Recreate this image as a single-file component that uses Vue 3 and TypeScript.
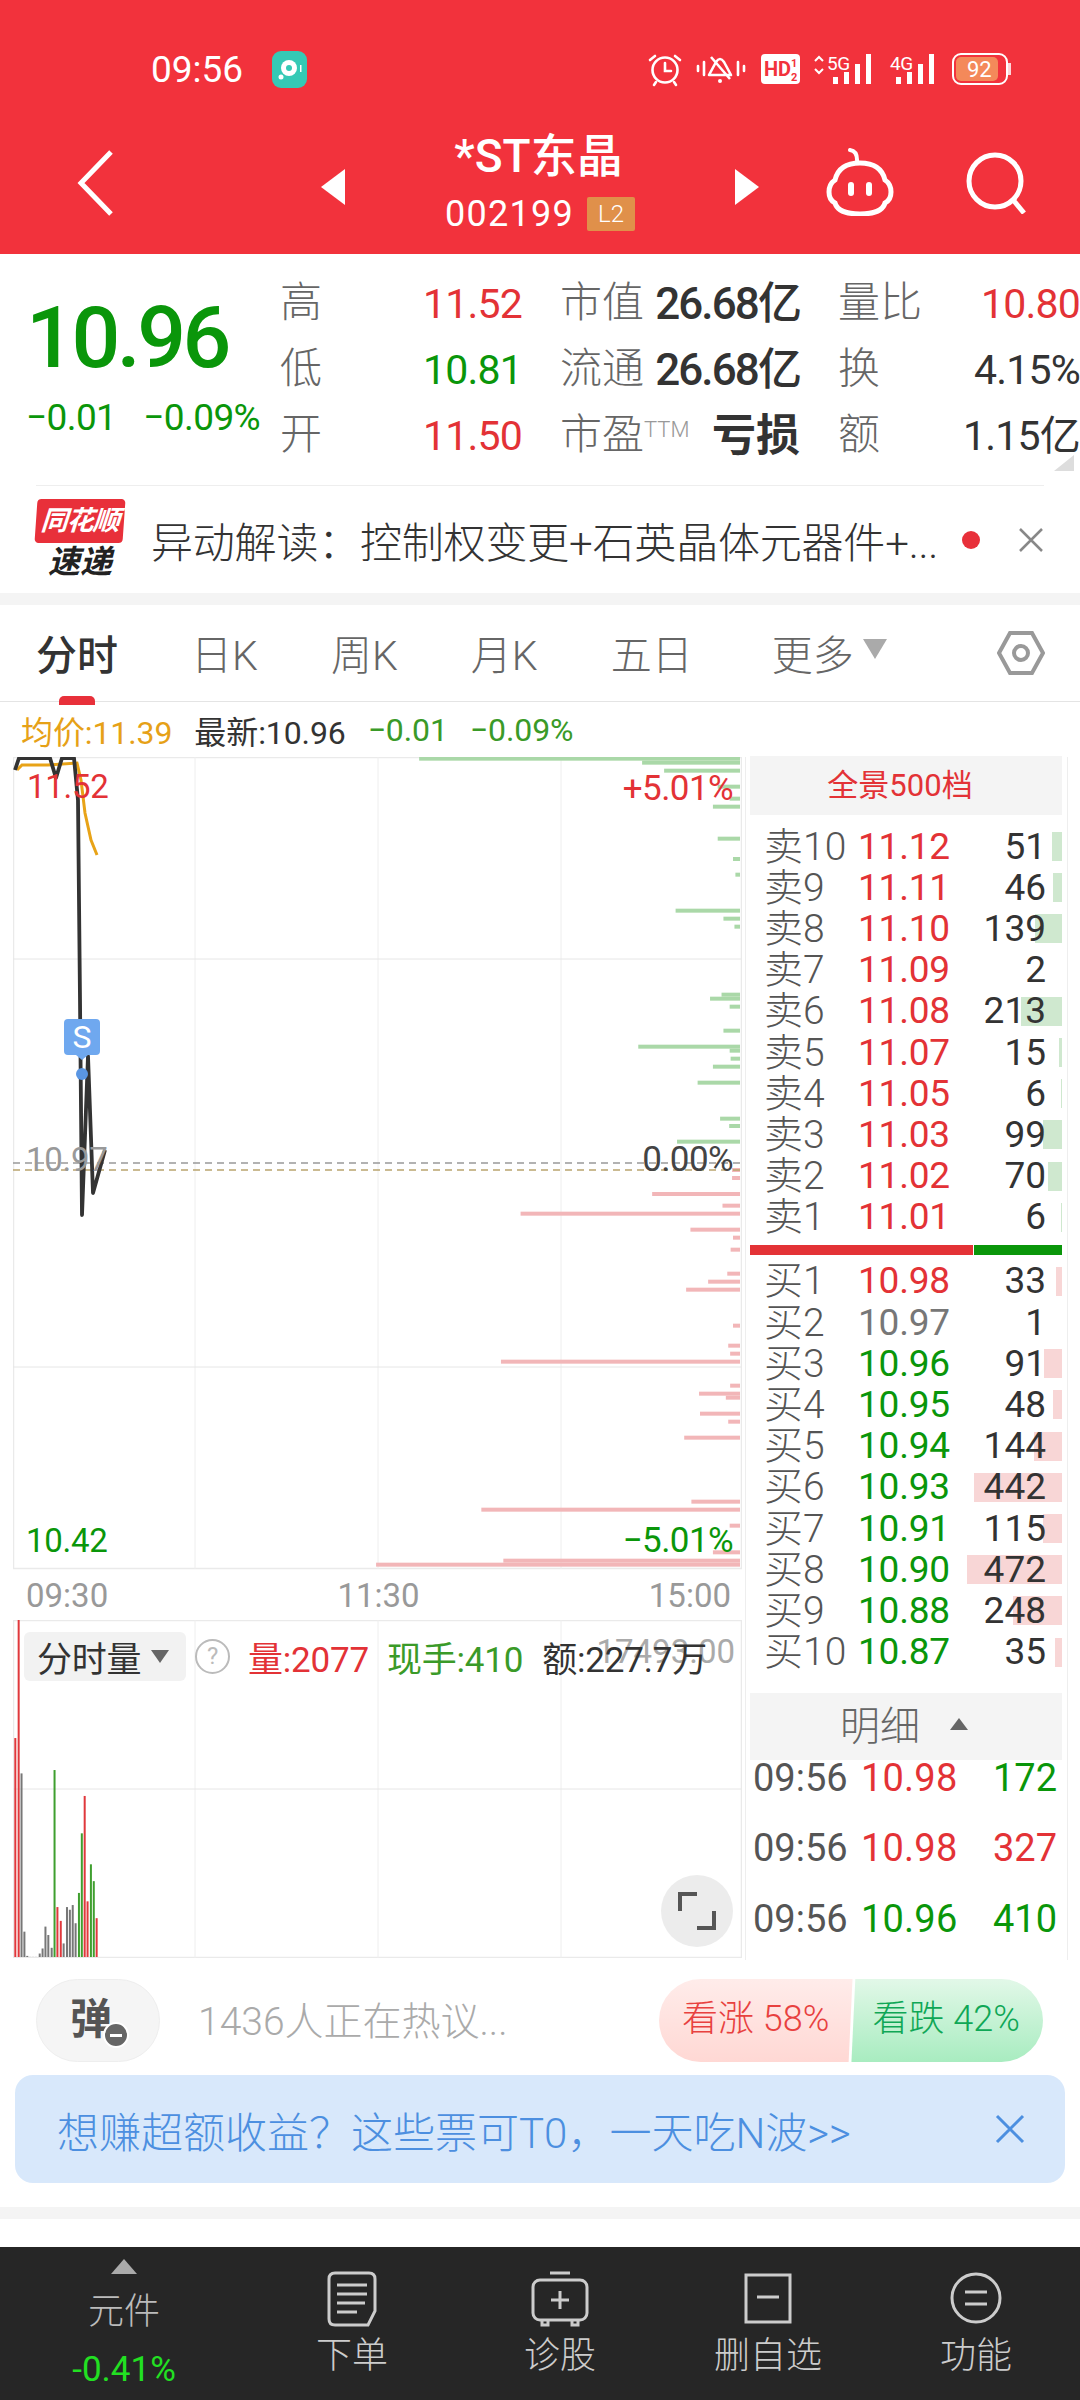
<script setup lang="ts">
// page coordinates of the order-flow bars, offset into the chart svg below
const chartLeft = 13
const chartTop = 757
const volTop = 1620

interface FlowBar { y: number; x: number; up: boolean }
const zoomX = (v: number) => v / 2.09

const greens: [number, number][] = [
  [176, 876], [188, 1342], [212, 1388], [260, 1500], [296, 1525], [320, 1490], [416, 1500], [477, 1532],
  [524, 1537], [632, 1412], [656, 1512], [680, 1535], [884, 1508], [896, 1484], [920, 1525], [992, 1512],
  [1040, 1334], [1052, 1525], [1076, 1527], [1100, 1490], [1148, 1458], [1256, 1505], [1278, 1524], [1325, 1415],
]
const redsTop: [number, number][] = [[1410, 1530], [1434, 1530], [1482, 1363]]
const redsLow: [number, number][] = [
  [17, 1510], [41, 1088], [89, 1443], [113, 1532], [149, 1527], [221, 1520], [245, 1480], [269, 1434],
  [377, 1532], [437, 1522], [461, 1526], [485, 1047], [557, 1526], [581, 1461], [593, 1517], [641, 1463],
  [665, 1522], [713, 1430], [905, 1445], [929, 1006], [977, 1525], [1057, 1490], [1082, 1052], [1094, 786],
]
const flowBars: FlowBar[] = [
  ...greens.map(([y, x]) => ({ y: 700 + y / 3 - chartTop, x: zoomX(x) - chartLeft, up: false })),
  ...redsTop.map(([y, x]) => ({ y: 700 + y / 3 - chartTop, x: zoomX(x) - chartLeft, up: true })),
  ...redsLow.map(([y, x]) => ({ y: 1200 + y / 3 - chartTop, x: zoomX(x) - chartLeft, up: true })),
]

const toPoints = (list: number[][]) => list.map(([x, y]) => `${x - chartLeft},${y - chartTop}`).join(' ')
const priceLine = toPoints([[15, 770], [19, 758], [50, 758], [56, 778], [62, 758], [74, 758], [78, 800], [80, 1000], [82, 1215], [88, 1056], [93, 1193], [105, 1150]])
const avgLine = toPoints([[17, 770], [22, 765], [48, 765], [77, 763], [81, 780], [85, 813], [91, 840], [97, 855]])

type Kind = 'r' | 'g' | 'k'
const volBars: [number, number, Kind][] = [
  [32, 410, 'r'], [39, 58, 'r'], [45, 515, 'k'], [51, 985, 'k'], [57, 1057, 'k'], [63, 1060, 'k'], [69, 1060, 'k'],
  [75, 1060, 'k'], [83, 1050, 'k'], [89, 1035, 'k'], [95, 970, 'k'], [101, 995, 'k'], [108, 1033, 'k'], [114, 505, 'g'],
  [120, 912, 'r'], [127, 953, 'r'], [133, 1020, 'k'], [140, 912, 'k'], [146, 920, 'k'], [152, 906, 'k'], [158, 960, 'k'],
  [165, 870, 'g'], [171, 693, 'g'], [177, 582, 'r'], [183, 895, 'r'], [190, 785, 'g'], [196, 835, 'g'], [202, 945, 'r'],
]
const volColor: Record<Kind, string> = { r: '#e0383c', g: '#3f9f2f', k: '#777777' }
const volRects = volBars.map(([x, top, kind]) => ({
  x: zoomX(x) - chartLeft - 1,
  y: 1600 + top / 2.97 - volTop,
  h: 1957 - (1600 + top / 2.97),
  color: volColor[kind],
}))

const gridX = [182, 365, 548]

interface Level { name: string; price: string; vol: number; bar: number; tone: string }
const sells: Level[] = [
  { name: '卖10', price: '11.12', vol: 51, bar: 10, tone: 'red' },
  { name: '卖9', price: '11.11', vol: 46, bar: 9, tone: 'red' },
  { name: '卖8', price: '11.10', vol: 139, bar: 27, tone: 'red' },
  { name: '卖7', price: '11.09', vol: 2, bar: 0, tone: 'red' },
  { name: '卖6', price: '11.08', vol: 213, bar: 41, tone: 'red' },
  { name: '卖5', price: '11.07', vol: 15, bar: 3, tone: 'red' },
  { name: '卖4', price: '11.05', vol: 6, bar: 1, tone: 'red' },
  { name: '卖3', price: '11.03', vol: 99, bar: 19, tone: 'red' },
  { name: '卖2', price: '11.02', vol: 70, bar: 14, tone: 'red' },
  { name: '卖1', price: '11.01', vol: 6, bar: 1, tone: 'red' },
]
const buys: Level[] = [
  { name: '买1', price: '10.98', vol: 33, bar: 6, tone: 'red' },
  { name: '买2', price: '10.97', vol: 1, bar: 0, tone: 'gray' },
  { name: '买3', price: '10.96', vol: 91, bar: 18, tone: 'green' },
  { name: '买4', price: '10.95', vol: 48, bar: 9, tone: 'green' },
  { name: '买5', price: '10.94', vol: 144, bar: 28, tone: 'green' },
  { name: '买6', price: '10.93', vol: 442, bar: 88, tone: 'green' },
  { name: '买7', price: '10.91', vol: 115, bar: 19, tone: 'green' },
  { name: '买8', price: '10.90', vol: 472, bar: 95, tone: 'green' },
  { name: '买9', price: '10.88', vol: 248, bar: 49, tone: 'green' },
  { name: '买10', price: '10.87', vol: 35, bar: 7, tone: 'green' },
]
const ticks = [
  { time: '09:56', price: '10.98', priceTone: 'red', vol: 172, volTone: 'green' },
  { time: '09:56', price: '10.98', priceTone: 'red', vol: 327, volTone: 'red' },
  { time: '09:56', price: '10.96', priceTone: 'green', vol: 410, volTone: 'green' },
]
const tabs = ['日K', '周K', '月K', '五日']
</script>

<template>
  <div class="page">
    <header class="top">
      <div class="status">
        <span class="clock">09:56</span>
        <span class="app-dot">
          <svg width="35" height="37" viewBox="0 0 35 37"><circle cx="17" cy="17" r="8" fill="#fff" /><circle cx="17" cy="17" r="3" fill="#35c9b5" /><circle cx="9" cy="26" r="2.5" fill="#fff" /><rect x="28" y="14" width="1.5" height="7" fill="#fff" /></svg>
        </span>
        <svg class="status-icons" width="368" height="36" viewBox="0 0 368 36" fill="none" stroke="#fff" stroke-width="2.6">
          <circle cx="19" cy="19" r="12.5" />
          <path d="M19 12v8h6M9 5l-5 4M29 5l5 4M10 31l-2 3M28 31l2 3" stroke-linecap="round" />
          <path d="M63 24l7-13q4-6 8 0l7 13zM65 6l19 22" stroke-linejoin="round" />
          <circle cx="74" cy="30" r="2" fill="#fff" stroke="none" />
          <path d="M52 15v5M58 11v13M92 11v13M98 15v5" stroke-linecap="round" />
          <rect x="115" y="3" width="39" height="30" rx="4" fill="#fff" stroke="none" />
          <text x="118" y="25" class="hd">HD</text>
          <text x="145" y="16" class="hd-sub">1</text>
          <text x="145" y="30" class="hd-sub">2</text>
          <path d="M169 10l4-4 4 4M169 18l4 4 4-4" stroke-width="2" />
          <text x="181" y="19" class="net">5G</text>
          <g stroke="none" fill="#fff">
            <rect x="187" y="26" width="5" height="7" /><rect x="198" y="21" width="5" height="12" /><rect x="209" y="13" width="5" height="20" /><rect x="220" y="3" width="5" height="30" />
            <rect x="250" y="26" width="5" height="7" /><rect x="261" y="21" width="5" height="12" /><rect x="272" y="13" width="5" height="20" /><rect x="283" y="3" width="5" height="30" />
          </g>
          <text x="244" y="19" class="net">4G</text>
          <rect x="307" y="3" width="54" height="30" rx="8" stroke-width="2" />
          <rect x="310" y="6" width="42" height="24" rx="5" fill="#f4895a" stroke="none" />
          <rect x="362" y="12" width="3" height="12" fill="#fff" stroke="none" opacity="0.8" />
          <text x="321" y="26" class="batt">92</text>
        </svg>
      </div>
      <div class="titlebar">
        <svg class="back" width="36" height="66" viewBox="0 0 36 66" fill="none" stroke="#fff" stroke-width="5"><path d="M34 2L4 33l30 31" /></svg>
        <span class="tri tri-left"></span>
        <div class="title">
          <div class="name">*ST东晶</div>
          <div class="code">002199 <span class="l2">L2</span></div>
        </div>
        <span class="tri tri-right"></span>
        <svg class="robot" width="70" height="68" viewBox="0 0 70 68" fill="none" stroke="#fff" stroke-width="5">
          <path d="M25 2q8 1 7 13" stroke-width="4" stroke-linecap="round" />
          <path d="M10 32q4-17 25-17t25 17q6 4 6 12t-6 11q-3 11-25 11T10 55q-6-3-6-11t6-12z" />
          <rect x="23" y="34" width="6" height="14" rx="3" fill="#fff" stroke="none" />
          <rect x="41" y="34" width="6" height="14" rx="3" fill="#fff" stroke="none" />
        </svg>
        <svg class="search" width="62" height="62" viewBox="0 0 62 62" fill="none" stroke="#fff" stroke-width="5"><circle cx="29" cy="29" r="26" /><path d="M48 49l10 12" /></svg>
      </div>
    </header>

    <section class="quote">
      <div class="price-box">
        <div class="last">10.96</div>
        <div class="change"><span>−0.01</span><span>−0.09%</span></div>
      </div>
      <div class="stats">
        <div class="cell"><span class="lab">高</span><span class="val red">11.52</span></div>
        <div class="cell"><span class="lab">市值</span><span class="val strong">26.68亿</span></div>
        <div class="cell"><span class="lab">量比</span><span class="val red">10.80</span></div>
        <div class="cell"><span class="lab">低</span><span class="val green">10.81</span></div>
        <div class="cell"><span class="lab">流通</span><span class="val strong">26.68亿</span></div>
        <div class="cell"><span class="lab">换</span><span class="val dark">4.15%</span></div>
        <div class="cell"><span class="lab">开</span><span class="val red">11.50</span></div>
        <div class="cell"><span class="lab">市盈<sup class="ttm">TTM</sup></span><span class="val strong loss">亏损</span></div>
        <div class="cell"><span class="lab">额</span><span class="val dark">1.15亿</span></div>
      </div>
      <span class="corner"></span>
    </section>

    <section class="news">
      <div class="logo">
        <div class="logo-top">同花顺</div>
        <div class="logo-bottom">速递</div>
      </div>
      <div class="news-text">异动解读：控制权变更+石英晶体元器件+...</div>
      <span class="news-dot"></span>
      <svg class="news-close" width="26" height="26" viewBox="0 0 26 26" stroke="#888" stroke-width="2.5"><path d="M2 2l22 22M24 2L2 24" /></svg>
    </section>

    <div class="band"></div>

    <nav class="tabs">
      <div class="tab active">分时<span class="marker"></span></div>
      <div v-for="tab in tabs" :key="tab" class="tab">{{ tab }}</div>
      <div class="tab more">更多<span class="more-tri"></span></div>
      <svg class="hex" width="48" height="46" viewBox="0 0 48 46" fill="none" stroke="#999" stroke-width="4"><path d="M13 3h22l11 20-11 20H13L2 23z" /><circle cx="24" cy="23" r="7" /></svg>
    </nav>

    <div class="info">
      <span class="avg">均价:11.39</span>
      <span class="dark">最新:10.96</span>
      <span class="green2">−0.01</span>
      <span class="green2">−0.09%</span>
    </div>

    <div class="content">
      <div class="left">
        <div class="chart">
          <svg class="plot" width="729" height="813" viewBox="0 0 729 813">
            <rect x="0.5" y="0.5" width="728" height="811" fill="none" stroke="#eaeaea" stroke-width="1.5" />
            <line v-for="x in gridX" :key="x" :x1="x" :x2="x" y1="0" y2="812" stroke="#eeeeee" />
            <line x1="0" x2="728" y1="202" y2="202" stroke="#e6e6e6" />
            <line x1="0" x2="728" y1="610" y2="610" stroke="#e6e6e6" />
            <rect v-for="(bar, i) in flowBars" :key="i" :x="bar.x" :y="bar.y - 2" :width="728 - 1 - bar.x" height="4" :fill="bar.up ? '#f2b6b8' : '#aad8a8'" />
            <line x1="0" x2="728" y1="406" y2="406" stroke="#999" stroke-width="1.6" stroke-dasharray="7 5" />
            <line x1="0" x2="728" y1="413" y2="413" stroke="#b9a46e" stroke-width="1.6" stroke-dasharray="7 5" />
            <polyline :points="avgLine" fill="none" stroke="#e8a317" stroke-width="3" />
            <polyline :points="priceLine" fill="none" stroke="#333" stroke-width="3.8" stroke-linejoin="round" />
            <circle cx="69" cy="317" r="6" fill="#5a96e3" />
          </svg>
          <span class="flag">S</span>
          <span class="axis red top-l">11.52</span>
          <span class="axis red top-r">+5.01%</span>
          <span class="axis gray mid-l">10.97</span>
          <span class="axis dark2 mid-r">0.00%</span>
          <span class="axis green low-l">10.42</span>
          <span class="axis green low-r">−5.01%</span>
        </div>
        <div class="times"><span>09:30</span><span>11:30</span><span>15:00</span></div>
        <div class="vol">
          <svg class="plot" width="729" height="338" viewBox="0 0 729 338">
            <rect x="0.5" y="0.5" width="728" height="337" fill="none" stroke="#eaeaea" stroke-width="1.5" />
            <line v-for="x in gridX" :key="x" :x1="x" :x2="x" y1="0" y2="338" stroke="#eeeeee" />
            <line x1="0" x2="728" y1="169" y2="169" stroke="#e6e6e6" />
            <rect v-for="(bar, i) in volRects" :key="i" :x="bar.x" :y="bar.y" width="2" :height="bar.h" :fill="bar.color" />
          </svg>
          <span class="vol-max">17493.00</span>
          <div class="vol-head">
            <span class="vol-tag">分时量<i class="tag-tri"></i></span>
            <span class="help">?</span>
            <span class="red">量:2077</span>
            <span class="green2">现手:410</span>
            <span class="dark">额:227.7万</span>
          </div>
          <span class="expand">
            <svg width="38" height="38" viewBox="0 0 38 38" fill="none" stroke="#555" stroke-width="4"><path d="M2 19V2h17M19 36h17V19" /></svg>
          </span>
        </div>
      </div>

      <aside class="book">
        <div class="book-head red">全景500档</div>
        <div class="levels sells">
          <div v-for="row in sells" :key="row.name" class="level">
            <span class="bar sell-bar" :style="{ width: row.bar + 'px' }"></span>
            <span class="lv-name">{{ row.name }}</span>
            <span class="lv-price red">{{ row.price }}</span>
            <span class="lv-vol">{{ row.vol }}</span>
          </div>
        </div>
        <div class="split"><span class="split-red"></span><span class="split-green"></span></div>
        <div class="levels buys">
          <div v-for="row in buys" :key="row.name" class="level">
            <span class="bar buy-bar" :style="{ width: row.bar + 'px' }"></span>
            <span class="lv-name">{{ row.name }}</span>
            <span class="lv-price" :class="row.tone">{{ row.price }}</span>
            <span class="lv-vol">{{ row.vol }}</span>
          </div>
        </div>
        <div class="detail-head">明细<i class="up-tri"></i></div>
        <div class="ticks">
          <div v-for="(t, i) in ticks" :key="i" class="tick">
            <span class="tk-time">{{ t.time }}</span>
            <span class="tk-price" :class="t.priceTone">{{ t.price }}</span>
            <span class="tk-vol" :class="t.volTone">{{ t.vol }}</span>
          </div>
        </div>
      </aside>
    </div>

    <div class="social">
      <div class="danmu">
        <span class="dan">弹</span>
        <span class="dan-minus"></span>
      </div>
      <div class="talk">1436人正在热议...</div>
      <div class="vote">
        <span class="vote-up">看涨 58%</span>
        <span class="vote-down">看跌 42%</span>
      </div>
    </div>

    <div class="promo">
      <span>想赚超额收益？这些票可T0，一天吃N波&gt;&gt;</span>
      <svg width="30" height="30" viewBox="0 0 30 30" stroke="#4c8fe0" stroke-width="3"><path d="M2 2l26 26M28 2L2 28" /></svg>
    </div>

    <div class="band band-low"></div>

    <footer class="nav">
      <div class="nav-item sector">
        <span class="nav-up"></span>
        <span class="sector-name">元件</span>
        <span class="sector-pct">-0.41%</span>
      </div>
      <div class="nav-item">
        <svg width="50" height="56" viewBox="0 0 50 56" fill="none" stroke="#ccc" stroke-width="3"><path d="M8 2h34q6 0 6 6v32l-7 14H8q-6 0-6-6V8q0-6 6-6z" /><path d="M10 14h30M10 23h30M10 32h28M10 41h20" /></svg>
        <span>下单</span>
      </div>
      <div class="nav-item">
        <svg width="58" height="56" viewBox="0 0 58 56" fill="none" stroke="#ccc" stroke-width="3"><path d="M19 2h20" /><rect x="2" y="9" width="54" height="40" rx="7" /><path d="M29 20v18M20 29h18" /><path d="M11 50v4h6v-4M41 50v4h6v-4" /></svg>
        <span>诊股</span>
      </div>
      <div class="nav-item">
        <svg width="48" height="56" viewBox="0 0 48 56" fill="none" stroke="#ccc" stroke-width="3"><rect x="2" y="4" width="44" height="47" /><path d="M13 26h22" /></svg>
        <span>删自选</span>
      </div>
      <div class="nav-item">
        <svg width="54" height="56" viewBox="0 0 54 56" fill="none" stroke="#ccc" stroke-width="3"><circle cx="27" cy="27" r="24" /><path d="M16 21h22M16 33h22" /></svg>
        <span>功能</span>
      </div>
    </footer>
  </div>
</template>

<style scoped>
.page {
  width: 1080px;
  height: 2400px;
  background: #fff;
  overflow: hidden;
  font-family: Roboto, "Noto Sans CJK SC", sans-serif;
  color: #333;
}
.red { color: #e33236; }
.green { color: #0a960a; }
.gray { color: #777; }
.dark { color: #333; }
.green2 { color: #3a9a28; }

.top {
  height: 254px;
  background: #f2323c;
  color: #fff;
}
.status {
  height: 122px;
  display: flex;
  align-items: center;
  padding: 16px 0 0 151px;
  box-sizing: border-box;
}
.clock {
  font-size: 37px;
  width: 121px;
}
.app-dot {
  width: 35px;
  height: 37px;
  border-radius: 9px;
  background: #35c9b5;
  display: block;
  flex: none;
}
.status-icons {
  margin-left: 339px;
  flex: none;
}
.hd { font: 700 20px Roboto, sans-serif; fill: #f2323c; stroke: none; }
.hd-sub { font: 700 11px Roboto, sans-serif; fill: #f2323c; stroke: none; }
.net { font: 400 19px Roboto, sans-serif; fill: #fff; stroke: none; letter-spacing: -0.5px; }
.batt { font: 400 22px Roboto, sans-serif; fill: #fff; stroke: none; }
.titlebar {
  height: 132px;
  display: flex;
  align-items: center;
  position: relative;
}
.back { margin: -10px 0 0 77px; }
.tri {
  width: 0;
  height: 0;
  border-top: 18px solid transparent;
  border-bottom: 18px solid transparent;
  margin-top: -2px;
}
.tri-left { border-right: 24px solid #fff; margin-left: 208px; }
.tri-right { border-left: 24px solid #fff; }
.title {
  width: 390px;
  text-align: center;
}
.name {
  font-size: 46px;
  font-weight: 500;
  line-height: 56px;
  margin: -14px 0 0 -3px;
}
.code {
  display: flex;
  justify-content: center;
  align-items: center;
  gap: 13px;
  font-size: 36px;
  line-height: 40px;
  margin-top: 10px;
  letter-spacing: 1.3px;
}
.l2 {
  background: #e0904a;
  font-size: 24px;
  font-weight: 300;
  width: 48px;
  height: 34px;
  line-height: 34px;
  text-align: center;
  border-radius: 2px;
  letter-spacing: 0;
}
.robot { margin: -13px 0 0 66px; }
.search { margin: -11px 0 0 71px; }

.quote {
  height: 231px;
  position: relative;
  display: flex;
  box-sizing: border-box;
}
.price-box {
  width: 280px;
  padding-left: 26px;
  box-sizing: border-box;
  flex: none;
}
.last {
  font-size: 86px;
  font-weight: 500;
  letter-spacing: -3.5px;
  line-height: 100px;
  color: #0a960a;
  margin-top: 34px;
}
.change {
  display: flex;
  gap: 27px;
  margin-top: 9px;
  font-size: 37px;
  letter-spacing: -0.6px;
  line-height: 42px;
  color: #0a960a;
  white-space: nowrap;
}
.stats {
  display: grid;
  grid-template-columns: 242px 240px 242px;
  grid-auto-rows: 66px;
  column-gap: 38px;
  padding-top: 17px;
}
.cell {
  display: flex;
  justify-content: space-between;
  align-items: center;
  white-space: nowrap;
}
.lab {
  font-size: 42px;
  line-height: 60px;
  color: #666;
  font-weight: 300;
  margin-top: -2px;
}
.ttm {
  font-size: 22px;
  color: #999;
  vertical-align: 12px;
  line-height: 0;
}
.val {
  font-size: 41px;
  line-height: 60px;
  letter-spacing: -0.8px;
}
.val.strong {
  font-weight: 500;
  color: #333;
  font-size: 44px;
  letter-spacing: -1.9px;
}
.val.loss { font-size: 44px; font-weight: 700; letter-spacing: 0; }
.corner {
  position: absolute;
  right: 6px;
  top: 201px;
  width: 0;
  height: 0;
  border-left: 20px solid transparent;
  border-bottom: 16px solid #ddd;
}

.news {
  margin: 0 36px;
  height: 108px;
  border-top: 1px solid #eee;
  display: flex;
  align-items: center;
  box-sizing: border-box;
}
.logo {
  width: 88px;
  margin-top: -2px;
  flex: none;
}
.logo-top {
  background: #e8303a;
  color: #fff;
  font-size: 27px;
  font-weight: 700;
  font-style: italic;
  height: 44px;
  line-height: 44px;
  text-align: center;
  border-radius: 4px;
  transform: skewX(-4deg);
  white-space: nowrap;
  letter-spacing: -1px;
}
.logo-bottom {
  color: #222;
  font-size: 32px;
  font-weight: 700;
  font-style: italic;
  line-height: 34px;
  text-align: center;
  margin-top: 2px;
}
.news-text {
  font-size: 42px;
  font-weight: 300;
  color: #333;
  margin-left: 27px;
  width: 805px;
  white-space: nowrap;
  letter-spacing: -0.2px;
  flex: none;
}
.news-dot {
  width: 18px;
  height: 18px;
  border-radius: 50%;
  background: #e8303a;
  margin-left: 6px;
  flex: none;
}
.news-close { margin-left: 38px; flex: none; }

.band {
  height: 12px;
  background: #f4f4f4;
}

.tabs {
  height: 97px;
  border-bottom: 1px solid #e4e4e4;
  box-sizing: border-box;
  display: flex;
  align-items: center;
  gap: 73px;
  padding: 0 0 0 36px;
  position: relative;
}
.tab {
  font-size: 41px;
  font-weight: 300;
  color: #666;
  position: relative;
  white-space: nowrap;
  margin-top: -2px;
}
.tab.active {
  color: #333;
  font-weight: 500;
}
.marker {
  position: absolute;
  left: 23px;
  bottom: -23px;
  width: 36px;
  height: 9px;
  border-radius: 5px 5px 0 0;
  background: #e8303a;
}
.more { margin-left: 6px; display: flex; align-items: center; gap: 9px; }
.more-tri {
  width: 0;
  height: 0;
  border-left: 12px solid transparent;
  border-right: 12px solid transparent;
  border-top: 20px solid #aaa;
  margin-top: -6px;
}
.hex {
  position: absolute;
  left: 997px;
  top: 25px;
}

.info {
  height: 55px;
  display: flex;
  align-items: center;
  padding-left: 21px;
  font-size: 32px;
  letter-spacing: -0.1px;
  gap: 22px;
}
.avg { color: #e6a117; }

.content {
  height: 1203px;
  display: flex;
}
.left {
  width: 745px;
  padding-left: 13px;
  box-sizing: border-box;
  flex: none;
}
.chart {
  height: 812px;
  position: relative;
}
.plot {
  position: absolute;
  left: 0;
  top: 0;
}
.axis {
  position: absolute;
  font-size: 33px;
  line-height: 36px;
  letter-spacing: -0.3px;
}
.dark2 { color: #444; }
.top-l { left: 14px; top: 12px; }
.top-r { right: 12px; top: 14px; font-size: 35px; letter-spacing: -0.6px; }
.mid-l { left: 13px; top: 385px; color: #999; }
.mid-r { right: 12px; top: 385px; font-size: 35px; letter-spacing: -0.6px; }
.low-l { left: 13px; top: 766px; }
.low-r { right: 12px; top: 766px; font-size: 35px; letter-spacing: -0.6px; }
.flag {
  position: absolute;
  left: 51px;
  top: 262px;
  width: 36px;
  height: 36px;
  background: #6fa8ef;
  color: #fff;
  border-radius: 4px;
  font-size: 32px;
  line-height: 36px;
  text-align: center;
}
.flag::after {
  content: "";
  position: absolute;
  left: 12px;
  top: 36px;
  width: 0;
  height: 0;
  border-left: 6px solid transparent;
  border-right: 6px solid transparent;
  border-top: 5px solid #6fa8ef;
}
.times {
  height: 51px;
  display: flex;
  justify-content: space-between;
  align-items: center;
  padding: 2px 11px 0 13px;
  box-sizing: border-box;
  width: 729px;
  font-size: 33px;
  color: #999;
}
.vol {
  height: 338px;
  position: relative;
}
.vol-max {
  position: absolute;
  right: 10px;
  top: 12px;
  font-size: 33px;
  color: #aaa;
}
.vol-head {
  position: absolute;
  left: 11px;
  top: 11px;
  display: flex;
  align-items: center;
  font-size: 35px;
  letter-spacing: -0.2px;
  white-space: nowrap;
}
.vol-tag {
  width: 162px;
  height: 49px;
  background: #f2f2f2;
  border-radius: 6px;
  display: flex;
  align-items: center;
  padding-left: 13px;
  box-sizing: border-box;
  color: #333;
  font-size: 35px;
  gap: 10px;
}
.tag-tri {
  width: 0;
  height: 0;
  border-left: 9px solid transparent;
  border-right: 9px solid transparent;
  border-top: 13px solid #666;
}
.help {
  width: 31px;
  height: 31px;
  border: 2px solid #bbb;
  border-radius: 50%;
  margin: 0 18px 0 9px;
  font-size: 24px;
  line-height: 31px;
  text-align: center;
  color: #bbb;
}
.vol-head .red { margin-right: 18px; }
.vol-head .green2 { margin-right: 19px; }
.expand {
  position: absolute;
  left: 648px;
  top: 255px;
  width: 72px;
  height: 72px;
  border-radius: 50%;
  background: #ececec;
  display: flex;
  align-items: center;
  justify-content: center;
}

.book {
  width: 323px;
  box-sizing: border-box;
  border: 1px solid #eee;
  border-width: 0 1px;
  padding: 0 5px 0 4px;
  flex: none;
}
.book-head {
  height: 59px;
  margin-top: -1px;
  background: #f4f4f4;
  text-align: center;
  font-size: 31px;
  line-height: 59px;
  padding-right: 12px;
}
.levels {
  display: flex;
  flex-direction: column;
}
.sells { margin-top: 11px; }
.buys { margin-top: 6px; }
.level {
  height: 41.2px;
  line-height: 40px;
  display: flex;
  align-items: center;
  position: relative;
  white-space: nowrap;
}
.bar {
  position: absolute;
  right: 0;
  top: 6px;
  height: 29px;
}
.sell-bar { background: #cfe8cf; }
.buy-bar { background: #f8d6d6; }
.lv-name {
  position: relative;
  font-size: 39px;
  font-weight: 300;
  color: #555;
  width: 94px;
  margin-left: 14px;
  flex: none;
}
.lv-price {
  position: relative;
  font-size: 37px;
  letter-spacing: -0.2px;
  width: 90px;
  flex: none;
}
.lv-vol {
  position: relative;
  font-size: 37px;
  color: #333;
  width: 98px;
  text-align: right;
  flex: none;
}
.split {
  display: flex;
  height: 10px;
  margin-top: 7px;
}
.split-red { width: 223px; background: #e33236; }
.split-green { flex: 1; background: #0a960a; margin-left: 1px; }
.detail-head {
  height: 67px;
  margin-top: 20px;
  background: #f4f4f4;
  font-size: 40px;
  font-weight: 300;
  color: #666;
  line-height: 67px;
  padding-left: 90px;
  box-sizing: border-box;
  display: flex;
  align-items: center;
}
.up-tri {
  width: 0;
  height: 0;
  border-left: 9px solid transparent;
  border-right: 9px solid transparent;
  border-bottom: 12px solid #666;
  margin: -4px 0 0 30px;
}
.ticks {
  display: flex;
  flex-direction: column;
  gap: 34.5px;
}
.tick {
  height: 36px;
  display: flex;
  font-size: 38px;
  line-height: 36px;
  white-space: nowrap;
}
.tk-time { color: #555; margin-left: 3px; width: 108px; }
.tk-price { width: 90px; letter-spacing: 0.2px; }
.tk-vol { width: 106px; text-align: right; }

.social {
  height: 115px;
  padding: 19px 37px 0 36px;
  box-sizing: border-box;
  display: flex;
}
.danmu {
  position: relative;
  width: 124px;
  height: 83px;
  border-radius: 42px;
  background: #f5f5f5;
  border: 1px solid #eee;
  box-sizing: border-box;
  text-align: center;
  flex: none;
}
.dan {
  font-size: 42px;
  font-weight: 700;
  color: #555;
  line-height: 80px;
  margin-right: 14px;
}
.dan-minus {
  position: absolute;
  left: 66px;
  top: 42px;
  width: 22px;
  height: 22px;
  border-radius: 50%;
  background: #666;
  border: 2px solid #fff;
}
.dan-minus::after {
  content: "";
  position: absolute;
  left: 5px;
  top: 10px;
  width: 12px;
  height: 3px;
  background: #fff;
}
.talk {
  font-size: 39px;
  font-weight: 300;
  color: #aaa;
  line-height: 87px;
  margin-left: 38px;
  flex: 1;
  white-space: nowrap;
}
.vote {
  width: 384px;
  height: 83px;
  display: flex;
  font-size: 36px;
  font-weight: 300;
  line-height: 81px;
  text-align: center;
  border-radius: 42px;
  overflow: hidden;
  white-space: nowrap;
  flex: none;
}
.vote-up {
  flex: 1;
  color: #e8413f;
  background: linear-gradient(#ffecea, #ffd8d4);
  clip-path: polygon(0 0, 100% 0, 98% 100%, 0 100%);
}
.vote-down {
  flex: 1;
  color: #0fa756;
  background: linear-gradient(#e2f8e8, #a8ecc0);
  clip-path: polygon(3% 0, 100% 0, 100% 100%, 1% 100%);
  margin-left: -3px;
}
.promo {
  margin: 0 15px;
  height: 108px;
  border-radius: 18px;
  background: #d8e8fb;
  color: #4c8fe0;
  font-size: 42px;
  font-weight: 300;
  display: flex;
  align-items: center;
  justify-content: space-between;
  padding: 0 40px 0 42px;
  white-space: nowrap;
}
.band-low { margin-top: 24px; }

.nav {
  margin-top: 28px;
  height: 153px;
  background: #262626;
  display: grid;
  grid-template-columns: 248px repeat(4, 208px);
  color: #ccc;
  font-size: 36px;
  font-weight: 300;
}
.nav-item {
  display: flex;
  flex-direction: column;
  align-items: center;
  padding-top: 24px;
  line-height: 48px;
}
.nav-item svg { height: 56px; margin-bottom: 5px; }
.sector { padding-top: 12px; }
.nav-up {
  width: 0;
  height: 0;
  border-left: 13px solid transparent;
  border-right: 13px solid transparent;
  border-bottom: 15px solid #aaa;
}
.sector-name { margin-top: 14px; color: #bbb; }
.sector-pct {
  color: #22e022;
  font-size: 35px;
  margin-top: 14px;
  line-height: 40px;
  font-weight: 400;
}
</style>
